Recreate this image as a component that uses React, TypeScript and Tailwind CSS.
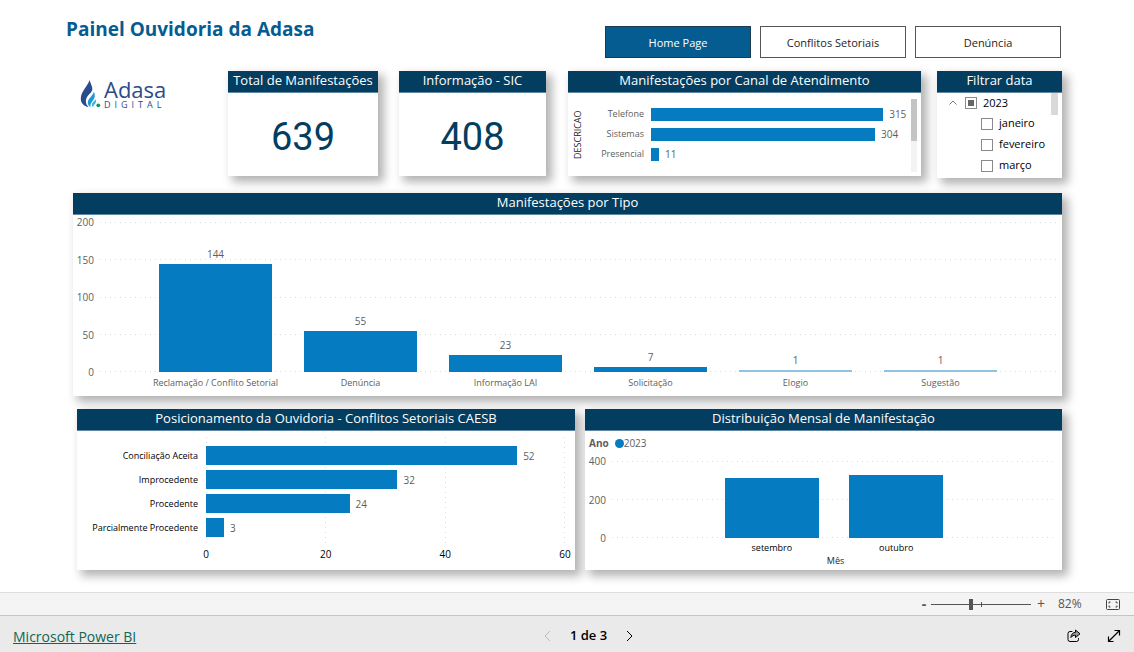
import { useState } from "react";
import type { ReactNode } from "react";

interface Item {
  label: string;
  value: number;
}

const PAGES = ["Home Page", "Conflitos Setoriais", "Denúncia"];
const MONTHS = ["janeiro", "fevereiro", "março"];

const CHANNELS: Item[] = [
  { label: "Telefone", value: 315 },
  { label: "Sistemas", value: 304 },
  { label: "Presencial", value: 11 },
];

const TYPES: Item[] = [
  { label: "Reclamação / Conflito Setorial", value: 144 },
  { label: "Denúncia", value: 55 },
  { label: "Informação LAI", value: 23 },
  { label: "Solicitação", value: 7 },
  { label: "Elogio", value: 1 },
  { label: "Sugestão", value: 1 },
];

const POSITIONS: Item[] = [
  { label: "Conciliação Aceita", value: 52 },
  { label: "Improcedente", value: 32 },
  { label: "Procedente", value: 24 },
  { label: "Parcialmente Procedente", value: 3 },
];

const MONTHLY: Item[] = [
  { label: "setembro", value: 312 },
  { label: "outubro", value: 328 },
];

function percent(value: number, max: number): string {
  return `${(value / max) * 100}%`;
}

function Card({ title, children }: { title: string; children: ReactNode }) {
  return (
    <section className="min-w-0 bg-white shadow-[5px_5px_9px_1px_rgba(0,0,0,0.3)]">
      <h2 className="h-[22px] overflow-hidden border-b border-[#5f87a3] bg-[#033d60] text-center text-[13px] leading-[18px] whitespace-nowrap text-white">
        {title}
      </h2>
      {children}
    </section>
  );
}

function BigNumber({ value }: { value: number }) {
  return (
    <p className="flex h-[83px] items-center justify-center pt-1.5 font-[Roboto,sans-serif] text-[38px] text-[#033d60]">
      {value}
    </p>
  );
}

interface ColumnChartProps {
  items: Item[];
  ticks: number[];
  plotClass: string;
  columnsClass: string;
  barClass: string;
  labelClass: string;
  showValues?: boolean;
}

function ColumnChart({
  items,
  ticks,
  plotClass,
  columnsClass,
  barClass,
  labelClass,
  showValues,
}: ColumnChartProps) {
  const max = ticks[0];
  return (
    <div className="grid grid-cols-[21px_1fr] gap-x-1.5 pr-1.5 text-[10px] leading-3 text-[#605e5c]">
      <div className="flex flex-col items-end justify-between">
        {ticks.map((t) => (
          <span key={t} className="flex h-0 items-center">
            {t}
          </span>
        ))}
      </div>
      <div className={`grid ${plotClass}`}>
        <div className="col-start-1 row-start-1 flex flex-col justify-between">
          {ticks.map((t) => (
            <span
              key={t}
              className="h-px bg-[repeating-linear-gradient(90deg,#dcdcdc_0_1px,transparent_1px_5px)]"
            />
          ))}
        </div>
        <div className={`col-start-1 row-start-1 grid ${columnsClass}`}>
          {items.map((item) => (
            <div
              key={item.label}
              className="flex h-full flex-col items-center justify-end"
            >
              {showValues && <span className="mb-1">{item.value}</span>}
              <div
                className={`min-h-0.5 shrink-0 ${barClass} ${item.value / max < 0.01 ? "bg-[#8fc3e1]" : "bg-[#057bc1]"}`}
                style={{ height: percent(item.value, max) }}
              />
            </div>
          ))}
        </div>
      </div>
      <div
        className={`col-start-2 grid h-[18px] items-center text-[9px] ${columnsClass}`}
      >
        {items.map((item) => (
          <span
            key={item.label}
            className={`text-center whitespace-nowrap ${labelClass}`}
          >
            {item.label}
          </span>
        ))}
      </div>
    </div>
  );
}

function ChannelChart() {
  return (
    <div className="flex h-[83px] pr-1 pl-1 text-[10px] leading-3 text-[#605e5c]">
      <span className="w-3 rotate-180 text-center text-[9px] text-[#252423] [writing-mode:vertical-rl]">
        DESCRICAO
      </span>
      <ul className="flex-1 pt-[11px]">
        {CHANNELS.map((c) => (
          <li key={c.label} className="flex h-5 items-center">
            <span className="w-[60px] shrink-0 text-right text-[9px]">
              {c.label}
            </span>
            <div className="ml-[7px] flex flex-1 items-center">
              <div
                className="h-[13px] shrink-0 bg-[#057bc1]"
                style={{ width: percent(c.value, 350) }}
              />
              <span className="ml-1.5">{c.value}</span>
            </div>
          </li>
        ))}
      </ul>
      <div className="mt-1.5 mb-1 ml-0.5 w-1.5 bg-[#f3f3f3]">
        <div className="h-[42px] bg-[#c4c4c4]" />
      </div>
    </div>
  );
}

function PositionChart() {
  const ticks = [0, 20, 40, 60];
  return (
    <div className="grid grid-cols-[121px_1fr] gap-x-2 pt-1.5 pr-2.5 pb-[9px] text-[10px] leading-3 text-black">
      <ul className="flex flex-col gap-[5px] pt-[9px] text-[9px]">
        {POSITIONS.map((p) => (
          <li
            key={p.label}
            className="flex h-[19px] items-center justify-end whitespace-nowrap"
          >
            {p.label}
          </li>
        ))}
      </ul>
      <div className="grid h-[110px]">
        <div className="col-start-1 row-start-1 flex justify-between">
          {ticks.map((t) => (
            <span
              key={t}
              className="w-px bg-[repeating-linear-gradient(180deg,#dcdcdc_0_1px,transparent_1px_5px)]"
            />
          ))}
        </div>
        <div className="col-start-1 row-start-1 flex flex-col gap-[5px] pt-[9px]">
          {POSITIONS.map((p) => (
            <div key={p.label} className="flex h-[19px] items-center">
              <div
                className="h-full shrink-0 bg-[#057bc1]"
                style={{ width: percent(p.value, 60) }}
              />
              <span className="ml-1.5 text-[#605e5c]">{p.value}</span>
            </div>
          ))}
        </div>
      </div>
      <div className="col-start-2 flex h-[14px] items-center justify-between">
        {ticks.map((t) => (
          <span key={t} className="flex w-0 justify-center">
            {t}
          </span>
        ))}
      </div>
    </div>
  );
}

function DateFilter() {
  const [open, setOpen] = useState(true);
  const box =
    "size-3 appearance-none border border-[#8a8a8a] bg-white p-0.5 checked:bg-[#666] bg-clip-content";
  return (
    <div className="flex h-[85px] justify-between overflow-hidden pr-1 pl-3 text-[11px] text-black">
      <div>
        <div className="flex h-5 items-center">
          <button
            type="button"
            aria-label="Expandir 2023"
            onClick={() => setOpen(!open)}
            className="mr-2 text-[#777]"
          >
            <svg width="8" height="8" viewBox="0 0 8 8" fill="none">
              <path d="M0.5 5.5 4 2l3.500 3.500" stroke="currentColor" />
            </svg>
          </button>
          <label className="flex items-center gap-1.5">
            <input type="checkbox" defaultChecked className={box} />
            2023
          </label>
        </div>
        {open &&
          MONTHS.map((m) => (
            <label key={m} className="ml-8 flex h-[21px] items-center gap-1.5">
              <input type="checkbox" className={box} />
              {m}
            </label>
          ))}
      </div>
      <div className="h-[22px] w-[7px] bg-[#d9d9d9]" />
    </div>
  );
}

function Logo() {
  return (
    <div className="flex items-center pt-[7px] pl-[7px] text-[#2b4c8c]">
      <svg width="21" height="30" viewBox="0 0 21 30" className="shrink-0">
        <path
          d="M9.500 1C8 7 1 12 .8 19.500.7 24 4 27.500 8.500 28 5.500 25 5.200 21.500 7 18c1.500-2.800 4-3.500 5.300-7C12.800 8 10.500 4.500 9.500 1Z"
          fill="#2b4c8c"
        />
        <path
          d="M13.800 12.500c.2 3.500-6 6.500-6 11 0 2 1 3.700 2.700 4.500-.5-3 .7-4.500 2.500-6.500 2-2.400 2.500-5.500.8-9Z"
          fill="#1b9ad6"
        />
        <path
          d="M15.500 20c-.3 2-3.500 3.200-3.700 5.600 0 1.100.5 2 1.400 2.500.1-1.800 1.200-2.300 2.100-3.600.9-1.300 1-3 .2-4.500Z"
          fill="#35b5e9"
        />
        <circle cx="18.300" cy="26.300" r="1.900" fill="#0a9a5b" />
      </svg>
      <div className="ml-[3px]">
        <p className="text-[22px] leading-[22px]">Adasa</p>
        <p className="text-[9px] leading-[9px] tracking-[4px]">DIGITAL</p>
      </div>
    </div>
  );
}

function ZoomBar() {
  const [zoom, setZoom] = useState(82);
  return (
    <div className="flex h-[23px] items-center justify-end border-t border-[#dedede] bg-[#f4f4f4] pr-[14px] text-[#555]">
      <button
        type="button"
        aria-label="Reduzir"
        onClick={() => setZoom(zoom - 1)}
        className="w-[14px] text-[14px] leading-4 font-bold"
      >
        -
      </button>
      <div className="grid w-[100px] items-center">
        <span className="col-start-1 row-start-1 h-px bg-[#555]" />
        <span className="col-start-1 row-start-1 h-[5px] w-px justify-self-center bg-[#555]" />
        <input
          type="range"
          aria-label="Zoom"
          min={10}
          max={190}
          value={zoom}
          onChange={(e) => setZoom(Number(e.target.value))}
          className="col-start-1 row-start-1 h-3 w-full appearance-none bg-transparent [&::-webkit-slider-thumb]:h-[11px] [&::-webkit-slider-thumb]:w-1 [&::-webkit-slider-thumb]:appearance-none [&::-webkit-slider-thumb]:bg-[#555]"
        />
      </div>
      <button
        type="button"
        aria-label="Ampliar"
        onClick={() => setZoom(zoom + 1)}
        className="w-5 text-[14px] leading-4"
      >
        +
      </button>
      <span className="w-[55px] pl-[7px] text-[12px]">{zoom}%</span>
      <button type="button" aria-label="Ajustar à página">
        <svg width="14" height="11" viewBox="0 0 14 11" fill="none" stroke="#444">
          <rect x=".5" y=".5" width="13" height="10" rx="1" />
          <path d="M3 4.500v-1.500h1.500M9.500 3h1.500v1.500M3 6.500v1.500h1.500M9.500 8h1.500v-1.500" />
        </svg>
      </button>
    </div>
  );
}

function Footer() {
  return (
    <footer className="grid h-[37px] grid-cols-[1fr_auto_1fr] items-center border-t border-[#c4c4c4] bg-[#eaeaea] pt-1 pr-[13px] pl-[13px] text-[13px]">
      <a href="#" className="justify-self-start text-[14px] text-[#0e6655] underline">
        Microsoft Power BI
      </a>
      <div className="flex items-center gap-[19px] pl-[43px] font-semibold text-black">
        <button type="button" aria-label="Página anterior" disabled className="text-[#bbb]">
          <svg width="7" height="12" viewBox="0 0 7 12" fill="none">
            <path d="M6 1 1 6l5 5" stroke="currentColor" />
          </svg>
        </button>
        <span>1 de 3</span>
        <button type="button" aria-label="Próxima página">
          <svg width="7" height="12" viewBox="0 0 7 12" fill="none">
            <path d="m1 1 5 5-5 5" stroke="currentColor" />
          </svg>
        </button>
      </div>
      <div className="flex items-center gap-[26px] justify-self-end text-black">
        <button type="button" aria-label="Compartilhar">
          <svg width="14" height="14" viewBox="0 0 14 14" fill="none" stroke="currentColor" strokeLinejoin="round">
            <path d="M5 2.500H3a2 2 0 0 0-2 2V10.500a2 2 0 0 0 2 2h6.500a2 2 0 0 0 2-2V9.500" strokeLinecap="round" />
            <path d="M8.500 1v2.300C5.800 3.500 4.200 5.200 3.900 8.500 5.200 6.800 6.500 6.200 8.500 6.200v2.300L13 4.800Z" fill="#999" />
          </svg>
        </button>
        <button type="button" aria-label="Tela inteira">
          <svg width="14" height="14" viewBox="0 0 14 14" fill="none" stroke="currentColor" strokeWidth="1.200">
            <path d="M1.500 12.500 12.500 1.500M7.500 1.500h5v5M1.500 7.500v5h5" />
          </svg>
        </button>
      </div>
    </footer>
  );
}

export default function App() {
  const [page, setPage] = useState(PAGES[0]);

  return (
    <div className="flex min-h-screen flex-col bg-white font-['Open_Sans',sans-serif]">
      <main className="flex-1 pb-[22px]">
        <header className="flex items-start justify-between pt-[18px] pr-[73px] pl-[66px]">
          <h1 className="text-[19px] leading-[22px] font-bold text-[#055c91]">
            Painel Ouvidoria da Adasa
          </h1>
          <nav className="mt-2 flex gap-[9px]">
            {PAGES.map((p) => (
              <button
                key={p}
                type="button"
                onClick={() => setPage(p)}
                className={`h-8 w-[146px] border pt-0.5 text-[11px] ${p === page ? "border-[#1d3c50] bg-[#055c91] text-white" : "border-[#555] bg-white text-[#252423]"}`}
              >
                {p}
              </button>
            ))}
          </nav>
        </header>

        <div className="mt-[13px] grid grid-cols-[473fr_494fr] items-start gap-[22px] pr-[72px] pl-[73px]">
          <div className="grid grid-cols-[134fr_150fr_147fr] items-start gap-[21px]">
            <Logo />
            <Card title="Total de Manifestações">
              <BigNumber value={639} />
            </Card>
            <Card title="Informação - SIC">
              <BigNumber value={408} />
            </Card>
          </div>
          <div className="grid grid-cols-[353fr_125fr] items-start gap-4">
            <Card title="Manifestações por Canal de Atendimento">
              <ChannelChart />
            </Card>
            <Card title="Filtrar data">
              <DateFilter />
            </Card>
          </div>
        </div>

        <div className="mt-[15px] pr-[72px] pl-[73px]">
          <Card title="Manifestações por Tipo">
            <div className="pt-[7px] pb-1.5">
              <ColumnChart
                items={TYPES}
                ticks={[200, 150, 100, 50, 0]}
                plotClass="h-[150px]"
                columnsClass="grid-cols-6 px-[43px]"
                barClass="w-[78%]"
                labelClass="pt-1"
                showValues
              />
            </div>
          </Card>
        </div>

        <div className="mt-[13px] grid grid-cols-[498fr_477fr] gap-2.5 pr-[72px] pl-[77px]">
          <Card title="Posicionamento da Ouvidoria - Conflitos Setoriais CAESB">
            <PositionChart />
          </Card>
          <Card title="Distribuição Mensal de Manifestação">
            <div className="flex h-[30px] items-start gap-1.5 pt-1.5 pl-1 text-[10px] leading-3 text-[#605e5c]">
              <span className="font-bold">Ano</span>
              <span className="flex items-center">
                <span className="size-[9px] rounded-full bg-[#057bc1]" />
                2023
              </span>
            </div>
            <ColumnChart
              items={MONTHLY}
              ticks={[400, 200, 0]}
              plotClass="h-[77px]"
              columnsClass="grid-cols-2 px-[22%]"
              barClass="w-[76%]"
              labelClass="pt-0.5 text-black"
            />
            <p className="pl-6 text-center text-[9px] leading-[9px] text-[#252423]">Mês</p>
          </Card>
        </div>
      </main>
      <ZoomBar />
      <Footer />
    </div>
  );
}
